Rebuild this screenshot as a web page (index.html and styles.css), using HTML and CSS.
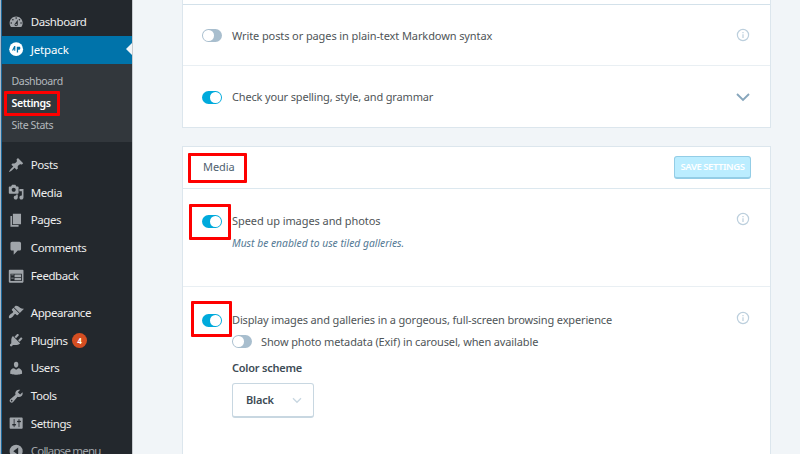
FILE: index.html
```
<!DOCTYPE html>
<html lang="en">
<head>
<meta charset="utf-8">
<title>Jetpack Settings</title>
<link rel="stylesheet" href="styles.css">
</head>
<body>
<div class="edge"></div>
<nav class="sidebar">
  <a class="item"><svg class="icon" viewBox="0 0 20 20"><path fill-rule="evenodd" d="M3.76 16h12.48c1.1-1.37 1.76-3.11 1.76-5 0-4.42-3.58-8-8-8s-8 3.58-8 8c0 1.89.66 3.63 1.76 5zM10 4c.55 0 1 .45 1 1s-.45 1-1 1-1-.45-1-1 .45-1 1-1zM6 6c.55 0 1 .45 1 1s-.45 1-1 1-1-.45-1-1 .45-1 1-1zm8 0c.55 0 1 .45 1 1s-.45 1-1 1-1-.45-1-1 .45-1 1-1zm-5.37 5.55L12 7v6c0 1.1-.9 2-2 2s-2-.9-2-2c0-.57.24-1.08.63-1.45zM4 10c.55 0 1 .45 1 1s-.45 1-1 1-1-.45-1-1 .45-1 1-1zm12 0c.55 0 1 .45 1 1s-.45 1-1 1-1-.45-1-1 .45-1 1-1zm-5 3c0-.55-.45-1-1-1s-1 .45-1 1 .45 1 1 1 1-.45 1-1z"/></svg><span>Dashboard</span></a>
  <a class="item current"><svg class="icon" viewBox="0 0 20 20"><circle cx="10" cy="10" r="8.5"/><path class="bolt" d="M9 6v6H7.600V9.500L6.400 11.800H4.800L7.600 6zM10.800 7.200h3.400c1.300 0 1.300 3.500-.2 3.500h-1.600V14h-1.600z"/></svg><span>Jetpack</span></a>
  <div class="submenu">
    <a>Dashboard</a>
    <a class="on">Settings<i class="mark mark-settings"></i></a>
    <a>Site Stats</a>
  </div>
  <div class="group">
    <a class="item"><svg class="icon" viewBox="0 0 20 20"><path d="M10.440 3.020l1.820-1.820 6.360 6.350-1.830 1.820c-1.050-.68-2.480-.57-3.410.36l-.75.75c-.92.93-1.040 2.350-.35 3.410l-1.830 1.820-2.410-2.410-2.800 2.790c-.42.42-3.380 2.710-3.800 2.290s1.860-3.390 2.280-3.810l2.790-2.790L4.100 9.360l1.830-1.820c1.050.69 2.480.57 3.400-.36l.75-.75c.93-.92 1.050-2.350.36-3.410z"/></svg><span>Posts</span></a>
    <a class="item"><svg class="icon" viewBox="0 0 20 20"><path fill-rule="evenodd" d="M13 11V4c0-.55-.45-1-1-1h-1.670L9 1H5L3.670 3H2c-.55 0-1 .45-1 1v7c0 .55.45 1 1 1h10c.55 0 1-.45 1-1zM7 4.500c1.380 0 2.500 1.120 2.500 2.500S8.380 9.500 7 9.500 4.500 8.380 4.500 7 5.620 4.500 7 4.500zM14 6h5v10.500c0 1.380-1.120 2.500-2.500 2.500S14 17.880 14 16.500s1.120-2.500 2.500-2.500c.17 0 .34.020.5.050V9h-3V6zm-4 8.050V13h2v3.500c0 1.380-1.120 2.500-2.500 2.500S7 17.880 7 16.500 8.120 14 9.500 14c.17 0 .34.020.5.050z"/></svg><span>Media</span></a>
    <a class="item"><svg class="icon" viewBox="0 0 20 20"><path d="M6 15V2h10v13H6zm-1 1h8v2H3V5h2v11z"/></svg><span>Pages</span></a>
    <a class="item"><svg class="icon" viewBox="0 0 20 20"><path d="M5 2h9c1.100 0 2 .9 2 2v7c0 1.100-.9 2-2 2h-2l-5 5v-5H5c-1.100 0-2-.9-2-2V4c0-1.100.9-2 2-2z"/></svg><span>Comments</span></a>
    <a class="item"><svg class="icon" viewBox="0 0 20 20"><path fill-rule="evenodd" d="M2 2h16c.55 0 1 .45 1 1v14c0 .55-.45 1-1 1H2c-.55 0-1-.45-1-1V3c0-.55.45-1 1-1zm15 14V7H3v9h14zM4 8v1h3V8H4zm4 0v3h8V8H8zm-4 4v1h3v-1H4zm4 0v3h8v-3H8z"/></svg><span>Feedback</span></a>
  </div>
  <div class="group">
    <a class="item"><svg class="icon" viewBox="0 0 20 20"><path d="M14.480 11.060L7.410 3.990l1.500-1.500c.5-.56 2.300-.47 3.510.32 1.210.8 1.430 1.280 2.910 2.100 1.180.64 2.450 1.260 4.450.85zm-.71.71L6.700 4.700 4.930 6.470c-.39.39-.39 1.020 0 1.410l1.060 1.060c.39.39.39 1.030 0 1.420-.6.600-1.430 1.110-2.210 1.690-.35.26-.7.530-1.010.840C1.430 14.230.4 16.080 1.400 17.070c.99 1 2.840-.03 4.180-1.360.31-.31.58-.66.85-1.020.57-.78 1.080-1.610 1.690-2.210.39-.39 1.020-.39 1.410 0l1.060 1.060c.39.39 1.020.39 1.410 0z"/></svg><span>Appearance</span></a>
    <a class="item plugins"><svg class="icon" viewBox="0 0 20 20"><path d="M13.110 4.360L9.870 7.600 8 5.730l3.240-3.240c.35-.34 1.050-.2 1.560.32.52.51.66 1.210.31 1.550zm-8 1.770l.91-1.120 9.010 9.010-1.190.84c-.71.71-2.630 1.160-3.820 1.160H6.140L4.900 17.260c-.59.59-1.540.59-2.120 0-.59-.58-.59-1.530 0-2.120l1.240-1.240v-3.880c0-1.130.4-3.190 1.090-3.890zm7.260 3.970l3.240-3.240c.34-.35 1.040-.21 1.550.31.52.51.66 1.210.31 1.550l-3.240 3.250z"/></svg><span>Plugins</span><b class="count">4</b></a>
    <a class="item"><svg class="icon" viewBox="0 0 20 20"><path d="M10 9.250c-2.270 0-2.730-3.440-2.730-3.440C7 4.020 7.820 2 9.970 2c2.160 0 2.980 2.020 2.710 3.810 0 0-.41 3.440-2.680 3.440zm0 2.570L12.720 10c2.390 0 4.520 2.330 4.520 4.530v2.490s-3.650 1.130-7.240 1.130c-3.650 0-7.240-1.130-7.240-1.130v-2.490c0-2.250 1.940-4.480 4.470-4.480z"/></svg><span>Users</span></a>
    <a class="item"><svg class="icon" viewBox="0 0 20 20"><path fill-rule="evenodd" d="M16.680 9.770c-1.340 1.340-3.300 1.670-4.950.99l-5.410 6.520c-.99.99-2.590.99-3.580 0s-.99-2.590 0-3.570l6.520-5.420c-.68-1.650-.35-3.610.99-4.950 1.280-1.280 3.120-1.620 4.720-1.060l-2.890 2.890 2.820 2.820 2.860-2.870c.53 1.580.18 3.390-1.080 4.650zM3.810 16.210c.4.39 1.040.39 1.430 0 .4-.4.4-1.040 0-1.430-.39-.4-1.030-.4-1.430 0-.39.39-.39 1.030 0 1.430z"/></svg><span>Tools</span></a>
    <a class="item"><svg class="icon" viewBox="0 0 20 20"><path fill-rule="evenodd" d="M18 16V4c0-.55-.45-1-1-1H3c-.55 0-1 .45-1 1v12c0 .55.45 1 1 1h14c.55 0 1-.45 1-1zM8 11h1c.55 0 1 .45 1 1s-.45 1-1 1H8v1.500c0 .28-.22.5-.5.5s-.5-.22-.5-.5V13H6c-.55 0-1-.45-1-1s.45-1 1-1h1V5.500c0-.28.22-.5.5-.5s.5.22.5.5V11zm5-2h-1c-.55 0-1-.45-1-1s.45-1 1-1h1V5.500c0-.28.22-.5.5-.5s.5.22.5.5V7h1c.55 0 1 .45 1 1s-.45 1-1 1h-1v5.500c0 .28-.22.5-.5.5s-.5-.22-.5-.5V9z"/></svg><span>Settings</span></a>
    <a class="item collapse"><svg class="icon" viewBox="0 0 20 20"><path fill-rule="evenodd" d="M10 2a8 8 0 1 0 0 16a8 8 0 1 0 0-16zM12.500 5.500v9L6.500 10z"/></svg><span>Collapse menu</span></a>
  </div>
</nav>
<main class="content">
  <section class="card composing">
    <div class="card-head"></div>
    <div class="row markdown">
      <i class="toggle"></i><span class="label t-markdown">Write posts or pages in plain-text Markdown syntax</span>
      <svg class="info" viewBox="0 0 14 14"><circle cx="7" cy="7" r="5.600"/><path d="M7 6.300v3.700M7 4.100v1.200"/></svg>
    </div>
    <div class="row spelling">
      <i class="toggle on"></i><span class="label t-spelling">Check your spelling, style, and grammar</span>
      <svg class="chevron" viewBox="0 0 14 10"><path d="M1 2l6 6 6-6"/></svg>
    </div>
  </section>
  <section class="card media">
    <div class="card-head">
      <h2>Media<i class="mark mark-media"></i></h2>
      <button class="save" disabled><span>SAVE SETTINGS</span></button>
    </div>
    <div class="row photon">
      <i class="toggle on"><i class="mark mark-photon"></i></i>
      <div class="text">
        <span class="label t-photon">Speed up images and photos</span>
        <em>Must be enabled to use tiled galleries.</em>
      </div>
      <svg class="info" viewBox="0 0 14 14"><circle cx="7" cy="7" r="5.600"/><path d="M7 6.300v3.700M7 4.100v1.200"/></svg>
    </div>
    <div class="row carousel">
      <i class="toggle on"><i class="mark mark-carousel"></i></i>
      <div class="text">
        <span class="label t-carousel">Display images and galleries in a gorgeous, full-screen browsing experience</span>
        <div class="sub"><i class="toggle"></i><span class="label t-exif">Show photo metadata (Exif) in carousel, when available</span></div>
        <strong>Color scheme</strong>
        <div class="select"><span>Black</span><svg class="caret" viewBox="0 0 10 7"><path d="M1 1.300l4 4 4-4"/></svg></div>
      </div>
      <svg class="info" viewBox="0 0 14 14"><circle cx="7" cy="7" r="5.600"/><path d="M7 6.300v3.700M7 4.100v1.200"/></svg>
    </div>
  </section>
</main>
</body>
</html>
```
FILE: styles.css
```
* { box-sizing: border-box; }
body {
  margin: 0;
  width: 800px;
  height: 454px;
  overflow: hidden;
  display: flex;
  background: #f1f5f8;
  font-family: "Noto Sans", "Open Sans", sans-serif;
  font-size: 11px;
  color: #4f5558;
}
.edge { width: 2px; background: linear-gradient(90deg, #a9b9c8 50%, #1d6799 50%); flex: none; }
.sidebar {
  width: 130px;
  flex: none;
  padding-top: 8px;
  background: #23282d;
  box-shadow: 1px 0 0 #c8ccd0;
  height: 454px;
  overflow: hidden;
  font-size: 11.500px;
}
.item {
  display: flex;
  align-items: center;
  height: 27.750px;
  padding-left: 6px;
  color: #eee;
  position: relative;
}
.item span { margin: -1px 0 0 6.500px; letter-spacing: -0.430px; white-space: nowrap; }
.icon { width: 16.300px; height: 16.300px; fill: #a0a5aa; flex: none; }
.current { background: #0073aa; color: #fff; }
.item.current span { letter-spacing: -0.150px; }
.current .icon { fill: #fff; }
.current .bolt { fill: #0073aa; }
.current::after {
  content: "";
  position: absolute;
  right: 0;
  top: 7.500px;
  border: 6.500px solid transparent;
  border-left-width: 0;
  border-right-color: #f1f5f8;
}
.submenu { height: 78.500px; padding: 6.500px 0 0 9.500px; background: #32373c; font-size: 10.600px; letter-spacing: -0.400px; }
.submenu a { display: block; width: max-content; height: 22px; line-height: 22px; color: #b4b9be; position: relative; }
.submenu .on { color: #fff; font-weight: 600; }
.group { margin-top: 9px; }
.item.plugins span { margin-top: 0; }
.count {
  width: 15px;
  height: 15px;
  margin-left: 4.500px;
  border-radius: 50%;
  background: #d54e21;
  color: #fff;
  font-size: 8px;
  line-height: 15px;
  text-align: center;
}
.collapse { color: #a0a5aa; }
.item.collapse span { letter-spacing: -0.800px; }
.mark { position: absolute; border: 3px solid #fe0000; border-radius: 1px; }
.mark-settings { left: -8px; top: -1.500px; width: 56px; height: 25px; }
.mark-media { left: -15px; top: 6px; width: 59px; height: 30px; }
.mark-photon { left: -13px; top: -11px; width: 42px; height: 36px; }
.mark-carousel { left: -11px; top: -13.500px; width: 41px; height: 36px; }

.content { flex: 1; padding-left: 50px; }
.card { width: 589px; background: #fff; border: 1px solid #dce6ed; }
.composing { height: 128px; border-top: 0; }
.composing .card-head { height: 5px; }
.media { margin-top: 18px; height: 330px; }
.card-head {
  height: 42px;
  border-bottom: 1px solid #d3e1ea;
  display: flex;
  justify-content: space-between;
  padding: 0 19px 0 20px;
}
.media .card-head { border-bottom-color: #dce8ef; }
h2 { margin: 0; font-size: 11px; font-weight: 400; line-height: 40px; position: relative; height: 41px; color: #4f6270; letter-spacing: -0.100px; }
.save {
  margin: 9px 0 0;
  width: 77px;
  height: 23px;
  padding: 0;
  border: 1px solid #93cde6;
  border-bottom-width: 2px;
  border-radius: 3px;
  background: #bbedff;
  color: #fff;
  font: 600 9.500px/20px "Noto Sans", sans-serif;
  letter-spacing: -0.450px;
  white-space: nowrap;
}
.row { display: flex; align-items: flex-start; padding: 0 20px 0 19px; }
.markdown { height: 61px; padding-top: 22px; border-bottom: 1px solid #e9eff3; }
.spelling { height: 61px; padding-top: 23px; }
.photon { height: 98px; padding-top: 24px; border-bottom: 1px solid #e9eff3; }
.carousel { padding-top: 25px; }
.toggle {
  flex: none;
  width: 20px;
  height: 13px;
  margin-top: 2px;
  border-radius: 7px;
  background: #a8bece;
  position: relative;
}
.toggle::before {
  content: "";
  position: absolute;
  left: 1.300px;
  top: 1.200px;
  width: 10.600px;
  height: 10.600px;
  border-radius: 50%;
  background: #fff;
}
.toggle.on { background: #00aadc; }
.toggle.on::before { left: 8.100px; }
.label { display: block; height: 18px; line-height: 18px; margin-left: 10px; white-space: nowrap; }
.t-markdown { letter-spacing: -0.100px; }
.t-spelling { letter-spacing: -0.160px; line-height: 16px; }
.t-photon { letter-spacing: -0.070px; line-height: 16px; }
.t-carousel { letter-spacing: -0.145px; line-height: 16px; }
.t-exif { letter-spacing: -0.130px; line-height: 16px; }
.text .label { margin-left: 0; }
.text { margin-left: 10px; }
em { display: block; font-size: 10.300px; line-height: 16px; margin-top: 4px; color: #537994; width: max-content; }
.info, .chevron { margin-left: auto; flex: none; fill: none; }
.info { width: 14px; height: 14px; stroke: #bccfdd; stroke-width: 1.200; }
.markdown .info { margin-top: 1px; }
.photon .info { margin-top: -1px; }
.carousel .info { margin-top: -1px; }
.chevron { width: 14px; height: 10px; margin-top: 3px; stroke: #87a6bc; stroke-width: 1.900; }
.sub { display: flex; height: 22px; padding-top: 4px; }
.sub .toggle { margin-top: 1px; }
.text .sub .label { margin-left: 9px; }
strong { display: block; width: max-content; font-weight: 600; line-height: 16px; margin-top: 8px; color: #3d4b55; letter-spacing: -0.230px; }
.select {
  width: 82px;
  height: 35px;
  margin-top: 7px;
  padding: 0 11px 0 13px;
  border: 1px solid #c8d7e1;
  border-bottom-width: 2px;
  border-radius: 3px;
  display: flex;
  align-items: center;
  justify-content: space-between;
  font-weight: 600;
  letter-spacing: -0.200px;
  line-height: 14px;
  color: #3d4b55;
}
.select span { margin-top: -1px; }
.caret { width: 10px; height: 7px; fill: none; stroke: #c8d7e1; stroke-width: 1.300; }
```
